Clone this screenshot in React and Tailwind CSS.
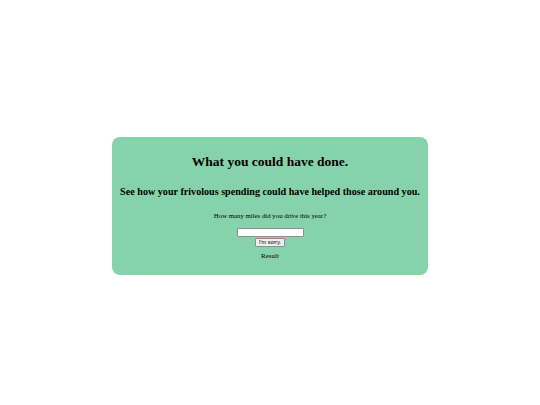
import React from "react";

export default function App() {
  return (
    <div className="w-[540px] h-[405px] bg-white flex items-center justify-center font-['Liberation_Serif',serif] text-black">
      <div className="w-[316px] h-[138px] mt-[7px] rounded-[8px] bg-[#86d3ab] flex flex-col items-center pt-[17px] whitespace-nowrap">
        <h1 className="text-[13.5px] font-bold leading-[15px]">What you could have done.</h1>
        <h2 className="text-[10.15px] font-bold leading-[12px] mt-[17px]">See how your frivolous spending could have helped those around you.</h2>
        <p className="text-[6.8px] leading-[8px] mt-[14px]">How many miles did you drive this year?</p>
        <input type="text" className="mt-[8px] w-[67px] h-[9px] bg-white border border-[#8f8f8f] rounded-[1px]" />
        <button className="mt-[1px] h-[9px] px-[3px] text-[5.5px] leading-[7px] font-['Liberation_Sans',sans-serif] bg-[#efefef] border border-[#8f8f8f] rounded-[1px]">I'm sorry.</button>
        <p className="text-[7px] leading-[8px] mt-[5px]">Result</p>
      </div>
    </div>
  );
}
